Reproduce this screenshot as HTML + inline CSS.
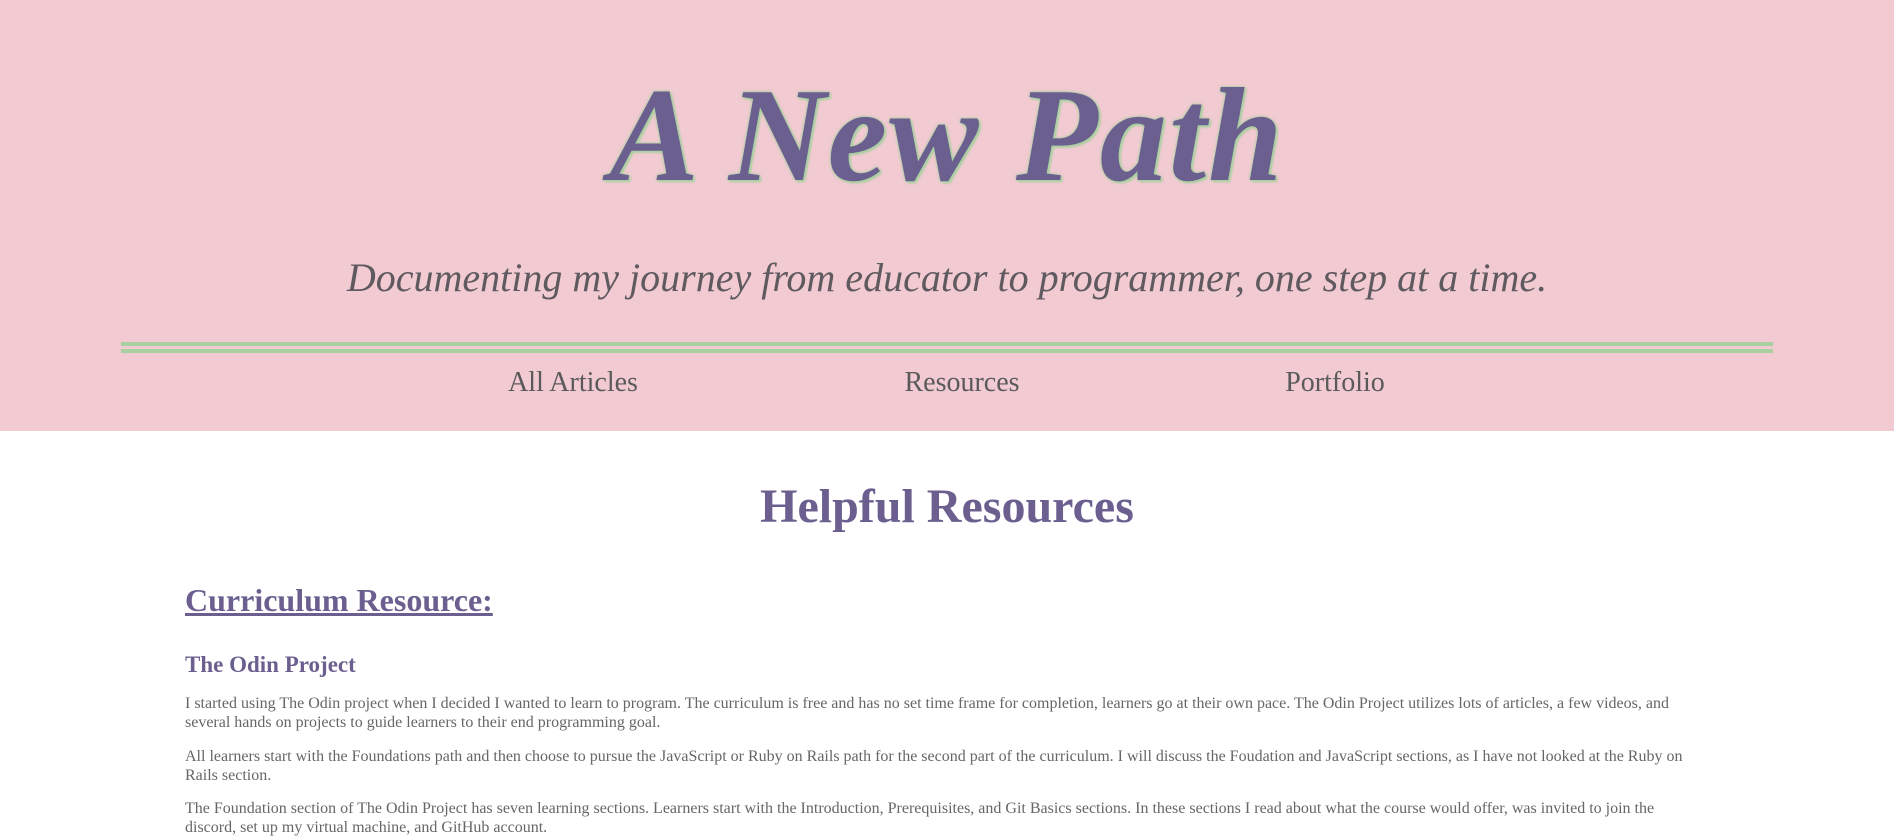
<!DOCTYPE html>
<html><head><meta charset="utf-8"><style>
*{margin:0;padding:0;box-sizing:border-box}
body{width:1894px;height:829px;overflow:hidden;background:#fff;font-family:"Liberation Serif",serif}
header{background:#f2cad2;height:431px;position:relative}
h1{position:absolute;top:58px;left:0;width:1894px;text-align:center;font-size:134px;font-style:italic;font-weight:bold;color:#6b5f8f;text-shadow:0 0 3px #a8d0a0,0 0 2px #a8d0a0,2px 2px 2px #a8d0a0;letter-spacing:2px;font-family:"Liberation Serif",serif}
.sub{position:absolute;top:254px;left:0;width:1894px;text-align:center;font-size:40px;font-style:italic;color:#5f5a5f}
.line{position:absolute;left:121px;width:1652px;height:4px;background:#a8d0a0}
nav a{position:absolute;top:367px;font-size:28px;color:#5a5a5a;text-decoration:none;transform:translateX(-50%)}
main{padding:0 185px}
h2{text-align:center;color:#6b5f8f;font-size:48px;margin-top:48px;line-height:56px}
h3{color:#6b5f8f;font-size:32px;text-decoration:underline;margin-top:46px;line-height:38px}
h4{color:#6b5f8f;font-size:23px;margin-top:32px;line-height:27px}
p{color:#666;font-size:16px;line-height:19.3px;margin-top:14px;width:1520px}
h4+p{margin-top:16px}
</style></head><body>
<header>
<h1>A New Path</h1>
<div class="sub">Documenting my journey from educator to programmer, one step at a time.</div>
<div class="line" style="top:342px"></div>
<div class="line" style="top:349px"></div>
<nav><a style="left:573px">All Articles</a><a style="left:962px">Resources</a><a style="left:1335px">Portfolio</a></nav>
</header>
<main>
<h2>Helpful Resources</h2>
<h3>Curriculum Resource:</h3>
<h4>The Odin Project</h4>
<p>I started using The Odin project when I decided I wanted to learn to program. The curriculum is free and has no set time frame for completion, learners go at their own pace. The Odin Project utilizes lots of articles, a few videos, and several hands on projects to guide learners to their end programming goal.</p>
<p>All learners start with the Foundations path and then choose to pursue the JavaScript or Ruby on Rails path for the second part of the curriculum. I will discuss the Foudation and JavaScript sections, as I have not looked at the Ruby on Rails section.</p>
<p>The Foundation section of The Odin Project has seven learning sections. Learners start with the Introduction, Prerequisites, and Git Basics sections. In these sections I read about what the course would offer, was invited to join the discord, set up my virtual machine, and GitHub account.</p>
</main>
</body></html>
